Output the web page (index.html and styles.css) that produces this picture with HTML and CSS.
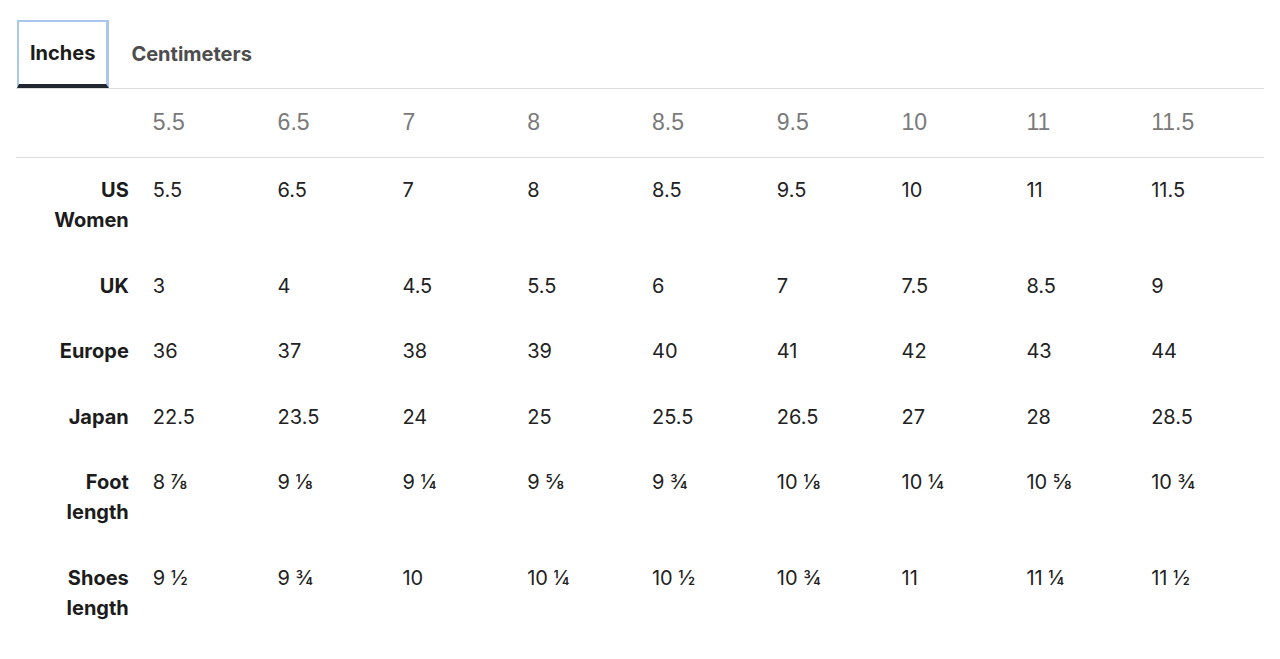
FILE: index.html
```html
<!DOCTYPE html>
<html lang="en">
<head>
<meta charset="utf-8">
<title>Size chart</title>
<link rel="stylesheet" href="styles.css">
</head>
<body>
<div class="page">
  <div class="tabs">
    <div class="tab tab-active">Inches</div>
    <div class="tab">Centimeters</div>
  </div>
  <table class="chart">
    <thead>
      <tr>
        <th class="corner"></th>
        <th>5.5</th><th>6.5</th><th>7</th><th>8</th><th>8.5</th><th>9.5</th><th>10</th><th>11</th><th>11.5</th>
      </tr>
    </thead>
    <tbody>
      <tr>
        <th class="label">US<br>Women</th>
        <td>5.5</td><td>6.5</td><td>7</td><td>8</td><td>8.5</td><td>9.5</td><td>10</td><td>11</td><td>11.5</td>
      </tr>
      <tr>
        <th class="label">UK</th>
        <td>3</td><td>4</td><td>4.5</td><td>5.5</td><td>6</td><td>7</td><td>7.5</td><td>8.5</td><td>9</td>
      </tr>
      <tr>
        <th class="label">Europe</th>
        <td>36</td><td>37</td><td>38</td><td>39</td><td>40</td><td>41</td><td>42</td><td>43</td><td>44</td>
      </tr>
      <tr>
        <th class="label">Japan</th>
        <td>22.5</td><td>23.5</td><td>24</td><td>25</td><td>25.5</td><td>26.5</td><td>27</td><td>28</td><td>28.5</td>
      </tr>
      <tr>
        <th class="label">Foot<br>length</th>
        <td>8 ⅞</td><td>9 ⅛</td><td>9 ¼</td><td>9 ⅝</td><td>9 ¾</td><td>10 ⅛</td><td>10 ¼</td><td>10 ⅝</td><td>10 ¾</td>
      </tr>
      <tr>
        <th class="label">Shoes<br>length</th>
        <td>9 ½</td><td>9 ¾</td><td>10</td><td>10 ¼</td><td>10 ½</td><td>10 ¾</td><td>11</td><td>11 ¼</td><td>11 ½</td>
      </tr>
    </tbody>
  </table>
</div>
</body>
</html>
```

FILE: styles.css
```css
html, body {
  margin: 0;
  padding: 0;
  background: #ffffff;
}

.page {
  padding: 20px 16px 0 16px;
  font-family: "Inter", "Liberation Sans", sans-serif;
  color: #1f1f1f;
}

.tabs {
  display: flex;
  gap: 10px;
  border-bottom: 1px solid #dcdcdc;
  height: 68px;
}

.tab {
  box-sizing: border-box;
  height: 68px;
  padding: 0 11px;
  display: flex;
  align-items: center;
  font-size: 20px;
  font-weight: 700;
  color: #4d4d4d;
  margin-left: 1px;
}

.tab-active {
  color: #1c1c1c;
  border: 2px solid #a9c6ef;
  border-right-width: 3px;
  border-bottom: 4px solid #1f2630;
  padding-top: 0;
}

.chart {
  width: 1248px;
  border-collapse: collapse;
  table-layout: fixed;
}

.chart thead th {
  font-family: "Liberation Sans", Arial, sans-serif;
  font-weight: 400;
  font-size: 23px;
  color: #7a7a7a;
  text-align: left;
  line-height: 30px;
  padding: 18px 12px 20px 12px;
  border-bottom: 1px solid #dcdcdc;
}

.chart td,
.chart .label {
  font-size: 20px;
  line-height: 30px;
  padding: 17px 12px 18.5px 12px;
  vertical-align: top;
}

.chart td {
  text-align: left;
  font-weight: 400;
  color: #222222;
}

.chart .label {
  text-align: right;
  font-weight: 700;
  color: #1c1c1c;
}
```
